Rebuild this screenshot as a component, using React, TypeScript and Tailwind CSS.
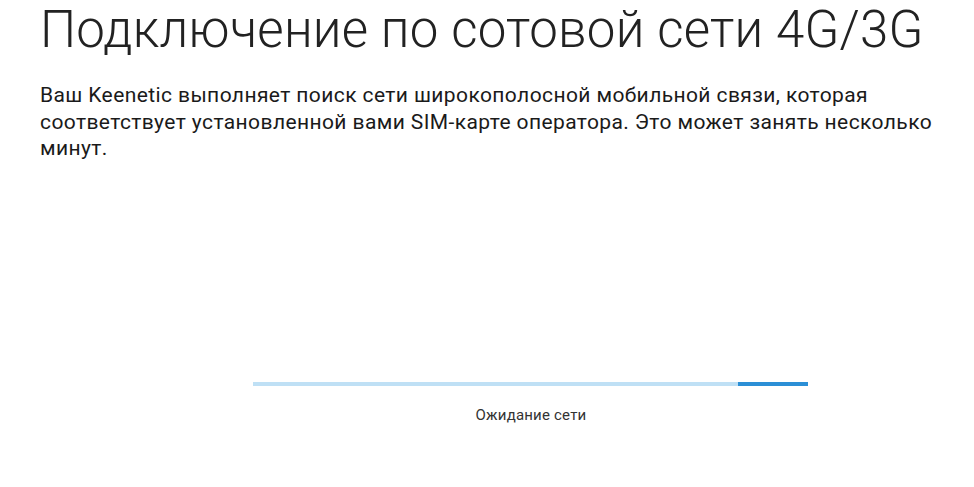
import React from 'react';

export default function App() {
  const progress = 87.5;

  return (
    <div className="w-[974px] h-[487px] bg-white text-[#222] font-['Roboto',sans-serif] flex flex-col">
      <div className="pl-10 pr-[24px]">
        <h1 className="text-[51px] leading-[60px] font-light tracking-[0.2px] text-[#222] whitespace-nowrap">
          Подключение по сотовой сети 4G/3G
        </h1>
        <p className="mt-[22px] text-[21px] leading-[26.5px] tracking-[0.4px] text-[#1a1a1a]">
          Ваш Keenetic выполняет поиск сети широкополосной мобильной связи, которая соответствует установленной вами SIM-карте оператора. Это может занять несколько минут.
        </p>
      </div>

      <div className="mt-[220px] flex flex-col items-center">
        <div className="w-[555px] h-[4px] bg-[#bfe0f5] flex justify-end ml-[86px]">
          <div className="h-full bg-[#2b8fd6]" style={{ width: `${100 - progress}%` }} />
        </div>
        <div className="mt-[18px] ml-[88px] text-[15px] tracking-[0.2px] text-[#333]">Ожидание сети</div>
      </div>
    </div>
  );
}
